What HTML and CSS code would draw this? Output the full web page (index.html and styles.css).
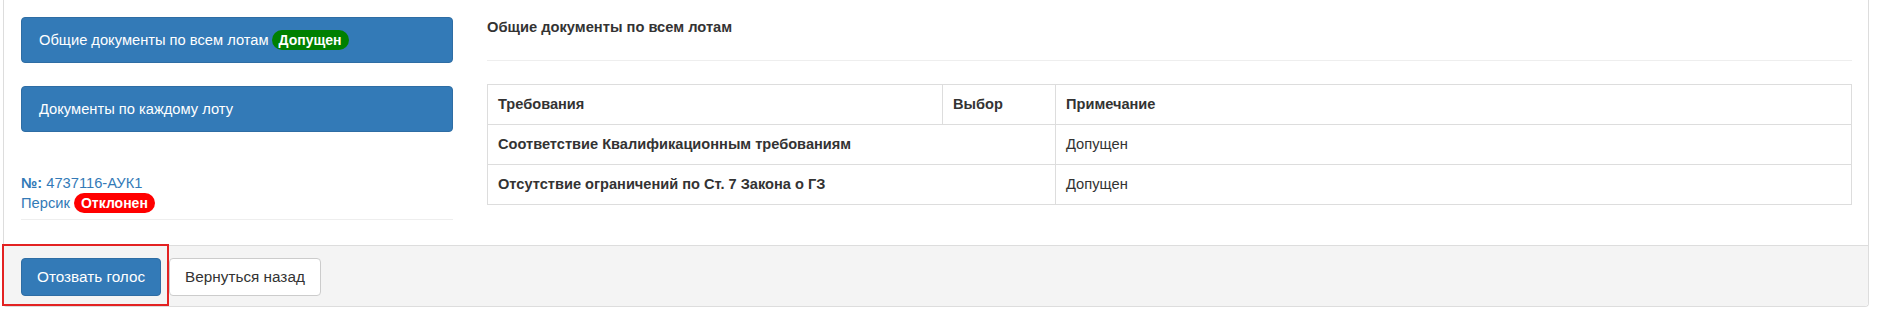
FILE: index.html
```html
<!DOCTYPE html>
<html lang="ru">
<head>
  <meta charset="UTF-8">
  <title>Голосование по заявке</title>
  <link rel="stylesheet" href="styles.css">
</head>
<body>

  <div class="panel">
    <div class="panel-body">

      <!-- левая колонка: разделы документов -->
      <div class="side">
        <a class="doc-btn" href="#">Общие документы по всем лотам <span class="badge badge-ok">Допущен</span></a>
        <a class="doc-btn" href="#">Документы по каждому лоту</a>

        <div class="lot-info">
          <div><a href="#"><b>№:</b> 4737116-АУК1</a></div>
          <div><a href="#">Персик</a> <span class="badge badge-no">Отклонен</span></div>
        </div>
      </div>

      <!-- правая колонка: требования -->
      <div class="main">
        <div class="main-title">Общие документы по всем лотам</div>
        <table class="req-table">
          <thead>
            <tr>
              <th class="col-req">Требования</th>
              <th class="col-choice">Выбор</th>
              <th>Примечание</th>
            </tr>
          </thead>
          <tbody>
            <tr>
              <td colspan="2"><b>Соответствие Квалификационным требованиям</b></td>
              <td>Допущен</td>
            </tr>
            <tr>
              <td colspan="2"><b>Отсутствие ограничений по Ст. 7 Закона о ГЗ</b></td>
              <td>Допущен</td>
            </tr>
          </tbody>
        </table>
      </div>

    </div>

    <div class="panel-footer">
      <button class="btn btn-primary">Отозвать голос</button>
      <button class="btn btn-default">Вернуться назад</button>
      <div class="highlight"></div>
    </div>
  </div>

</body>
</html>
```

FILE: styles.css
```css
:root {
  --brand: #337ab7;
  --brand-border: #2e6da4;
  --text: #333333;
  --line: #dddddd;
  --line-light: #eeeeee;
}

body {
  margin: 0;
  font-family: "Liberation Sans", Arial, sans-serif;
  font-size: 14.7px;
  line-height: 20px;
  color: var(--text);
  background: #fff;
}

a {
  color: var(--brand);
  text-decoration: none;
}

b,
th {
  font-size: 14.6px;
}

.panel {
  margin-left: 3px;
  width: 1864px;
  border: 1px solid var(--line);
  border-top: none;
  border-radius: 0 0 4px 4px;
}

.panel-body {
  display: flex;
  gap: 34px;
  padding: 17px 16px 25px 17px;
}

/* Left column */
.side {
  width: 432px;
  flex: none;
}

.doc-btn {
  display: flex;
  align-items: center;
  gap: 3px;
  height: 46px;
  box-sizing: border-box;
  padding: 0 17px;
  margin-bottom: 23px;
  background: var(--brand);
  border: 1px solid var(--brand-border);
  border-radius: 4px;
  color: #fff;
}

.badge {
  display: inline-block;
  padding: 0 7px;
  border-radius: 10px;
  color: #fff;
  font-weight: bold;
  font-size: 14px;
  line-height: 20px;
}

.badge-ok { background: #008000; }
.badge-no { background: #ff0000; }

.lot-info {
  margin-top: 41px;
  padding-bottom: 6px;
  border-bottom: 1px solid var(--line-light);
}

/* Right column */
.main {
  flex: 1;
}

.main-title {
  font-weight: bold;
  padding: 0 0 23px;
  border-bottom: 1px solid var(--line-light);
  margin-bottom: 23px;
}

.req-table {
  width: 100%;
  border-collapse: collapse;
}

.req-table th,
.req-table td {
  border: 1px solid var(--line);
  padding: 9px 10px 10px;
  text-align: left;
  vertical-align: top;
}

.col-req { width: 434px; }
.col-choice { width: 92px; }

/* Footer with actions */
.panel-footer {
  position: relative;
  display: flex;
  gap: 8px;
  padding: 12px 17px 10px;
  background: #f4f4f4;
  border-top: 1px solid var(--line);
  border-radius: 0 0 4px 4px;
}

.btn {
  height: 38px;
  padding: 0 15px;
  border-radius: 4px;
  font-family: inherit;
  font-size: 15.3px;
  cursor: pointer;
}

.btn-primary {
  background: var(--brand);
  border: 1px solid var(--brand-border);
  color: #fff;
}

.btn-default {
  background: #fff;
  border: 1px solid #cccccc;
  color: var(--text);
}

.highlight {
  position: absolute;
  left: -2px;
  top: -2px;
  width: 163px;
  height: 58px;
  border: 2px solid #e32222;
  pointer-events: none;
}
```
